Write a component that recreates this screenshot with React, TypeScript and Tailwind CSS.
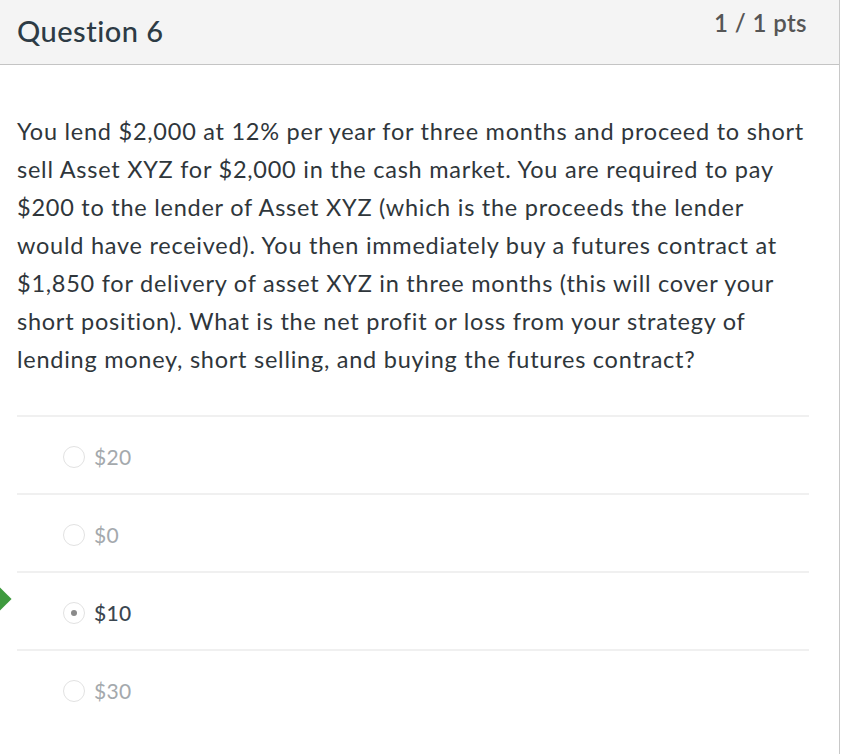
const answers = [
  { label: "$20", selected: false },
  { label: "$0", selected: false },
  { label: "$10", selected: true },
  { label: "$30", selected: false },
];

function Radio({ selected }: { selected: boolean }) {
  return (
    <span className="flex h-[22px] w-[22px] items-center justify-center rounded-full border border-[#e2e2e2] bg-white">
      {selected && <span className="h-[6px] w-[6px] rounded-full bg-[#8a8a8a]" />}
    </span>
  );
}

export default function App() {
  return (
    <div className="relative h-[754px] w-[842px] overflow-hidden bg-white font-['Lato',sans-serif]">
      <div className="h-full w-[840px] border-r border-[#c8c8c8]">
        <header className="flex h-[65px] items-start justify-between border-b border-[#c4c4c4] bg-[#f4f4f4] pl-[17px] pr-[32px]">
          <h2 className="mt-[9px] text-[29px] font-medium tracking-[0.5px] text-[#2d3b45]">Question 6</h2>
          <span className="mt-[5px] text-[24px] font-semibold tracking-[0.4px] text-[#565656]">1 / 1 pts</span>
        </header>

        <div className="pl-[17px] pr-[28px] pt-[47px]">
          <p className="text-[23.5px] leading-[38px] tracking-[0.75px] text-[#2f363b]">
            You lend $2,000 at 12% per year for three months and proceed to short sell Asset XYZ for $2,000 in the cash market. You are required to pay $200 to the lender of Asset XYZ (which is the proceeds the lender would have received). You then immediately buy a futures contract at $1,850 for delivery of asset XYZ in three months (this will cover your short position). What is the net profit or loss from your strategy of lending money, short selling, and buying the futures contract?
          </p>

          <div className="mt-[37px] mr-[2px]">
            {answers.map((a) => (
              <div
                key={a.label}
                className="relative flex h-[78px] items-center gap-[9px] border-t-2 border-[#f0f0f0] pl-[46px] pt-[4px]"
              >
                {a.selected && (
                  <span className="absolute left-[-32px] top-[15px] h-[22px] w-[22px] rotate-45 bg-[#3e9a3e]" />
                )}
                <Radio selected={a.selected} />
                <span
                  className={
                    a.selected
                      ? "text-[21px] font-medium tracking-[0.3px] text-[#3b4650]"
                      : "text-[21px] tracking-[0.3px] text-[#a4a9ad]"
                  }
                >
                  {a.label}
                </span>
              </div>
            ))}
          </div>
        </div>
      </div>
    </div>
  );
}
